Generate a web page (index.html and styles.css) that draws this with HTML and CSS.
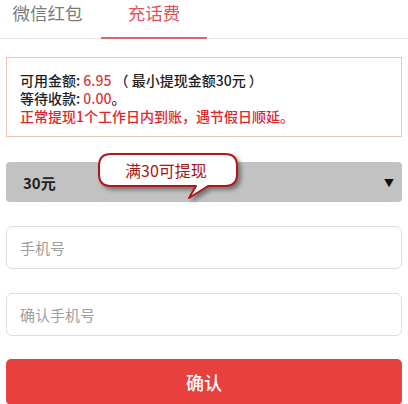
FILE: index.html
```html
<!DOCTYPE html>
<html lang="zh-CN">
<head>
<meta charset="utf-8">
<link rel="stylesheet" href="styles.css">
</head>
<body>
<div class="page">
  <div class="tabs">
    <div class="tab">微信红包</div>
    <div class="tab active">充话费</div>
  </div>
  <div class="notice">
    <div class="line">可用金额: <span class="amt">6.95</span> （ 最小提现金额30元 ）</div>
    <div class="line">等待收款: <span class="amt">0.00</span>。</div>
    <div class="line warn">正常提现1个工作日内到账，遇节假日顺延。</div>
  </div>
  <div class="select-wrap">
    <div class="select"><span class="sel-val">30元</span><span class="arrow">▼</span></div>
    <div class="tip">
      <svg class="tip-shape" width="150" height="52" viewBox="-2 -2 150 52">
        <path d="M12,0 H126 Q138,0 138,12 V20 Q138,32 126,32 H109 L90,44 L97,32 H12 Q0,32 0,20 V12 Q0,0 12,0 Z" fill="#fff" stroke="#b01818" stroke-width="2" stroke-linejoin="round"/>
      </svg>
      <span class="tip-text">满30可提现</span>
    </div>
  </div>
  <div class="input"><span class="ph">手机号</span></div>
  <div class="input second"><span class="ph">确认手机号</span></div>
  <div class="btn">确认</div>
</div>
</body>
</html>
```
FILE: styles.css
```css
* { box-sizing: border-box; }
html, body { margin: 0; padding: 0; background: #fff; }
body { font-family: "Noto Sans CJK SC", "Noto Sans", sans-serif; width: 408px; height: 404px; overflow: hidden; }
.page { padding: 0 6px; }
.tabs {
  display: flex;
  align-items: flex-end;
  margin: 0 -6px;
  height: 39px;
  border-bottom: 1px solid #e8e8e8;
}
.tab {
  height: 39px;
  margin-bottom: -1px;
  font-size: 17.5px;
  line-height: 26px;
  color: #7b7b7b;
  text-align: center;
  border-bottom: 2px solid transparent;
}
.tab:first-child { width: 95px; }
.tab.active {
  width: 106px;
  margin-left: 6px;
  color: #de5456;
  border-bottom-color: #d9686b;
}
.notice {
  margin-top: 18px;
  border: 1px solid #efc7b0;
  padding: 13px 13px 11px;
  font-size: 14px;
  font-weight: 500;
  line-height: 18px;
  color: #1e1e1e;
}
.amt { color: #d83b3e; }
.warn { color: #e0262c; }
.select-wrap { position: relative; margin-top: 25px; }
.select {
  height: 40px;
  background: #c2c2c2;
  border-radius: 4px;
  display: flex;
  align-items: center;
  justify-content: space-between;
  padding: 0 8px 0 17px;
}
.sel-val { font-size: 15px; font-weight: bold; color: #222; }
.arrow { font-size: 10px; color: #111; }
.tip {
  position: absolute;
  left: 93px;
  top: -8px;
  width: 138px;
  height: 32px;
  display: flex;
  align-items: center;
  justify-content: center;
}
.tip-shape {
  position: absolute;
  left: -2px;
  top: -2px;
  overflow: visible;
  filter: drop-shadow(3px 3px 2px rgba(0,0,0,0.4));
}
.tip-text {
  position: relative;
  font-size: 16px;
  color: #a81616;
  margin-left: -4px;
}
.input {
  margin-top: 24px;
  height: 43px;
  border: 1px solid #dedede;
  border-radius: 6px;
  display: flex;
  align-items: center;
  padding-left: 13px;
}
.ph { font-size: 15px; color: #9e9e9e; }
.btn {
  margin-top: 23px;
  height: 46px;
  background: #e8403d;
  border-radius: 5px;
  color: #fff;
  font-size: 18px;
  font-weight: 500;
  display: flex;
  align-items: center;
  justify-content: center;
}
```
